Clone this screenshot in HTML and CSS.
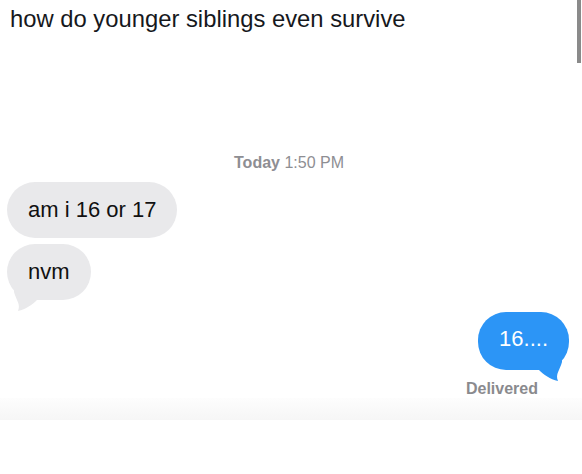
FILE: index.html
```html
<!DOCTYPE html>
<html lang="en">
<head>
<meta charset="utf-8">
<title>how do younger siblings even survive</title>
<link rel="stylesheet" href="styles.css">
</head>
<body>
  <div class="scrollbar"></div>
  <p class="post-text">how do younger siblings even survive</p>

  <section class="thread">
    <div class="stamp"><span class="stamp-day">Today</span> 1:50 PM</div>

    <div class="row row-in row-first">
      <div class="bubble bubble-in">am i 16 or 17</div>
    </div>
    <div class="row row-in">
      <div class="bubble bubble-in">nvm
        <svg class="tail tail-in" width="30" height="24" viewBox="0 0 30 24" aria-hidden="true">
          <path d="M3 0 L3 4 C5 12 10 16 7 23 C15 21 21 17 27 11 L27 0 Z"/>
        </svg>
      </div>
    </div>
    <div class="row row-out">
      <div class="bubble bubble-out">16....
        <svg class="tail tail-out" width="30" height="24" viewBox="0 0 30 24" aria-hidden="true">
          <path d="M3 0 L3 4 C5 12 10 16 7 23 C15 21 21 17 27 11 L27 0 Z"/>
        </svg>
      </div>
    </div>
    <div class="receipt">Delivered</div>
    <div class="fade"></div>
  </section>
</body>
</html>
```

FILE: styles.css
```css
html, body {
  margin: 0;
  padding: 0;
  background: #ffffff;
}

body {
  width: 582px;
  height: 474px;
  overflow: hidden;
  position: relative;
  font-family: "Liberation Sans", Arial, sans-serif;
  color: #0f1419;
}

/* thin scrollbar thumb at the top right */
.scrollbar {
  position: absolute;
  top: 0;
  right: 1px;
  width: 4px;
  height: 63px;
  background: #8a8a8a;
}

.post-text {
  margin: 0;
  padding: 5px 0 0 10px;
  font-size: 23.8px;
  line-height: 28px;
  color: #16181c;
}

.thread {
  display: flex;
  flex-direction: column;
  margin-top: 120px;
}

.stamp {
  text-align: center;
  font-size: 16px;
  line-height: 19px;
  color: #8e8e93;
  margin-left: -4px;
}

.stamp-day {
  font-weight: 700;
}

.row {
  display: flex;
  padding: 0 13px 0 7px;
}

.row-in {
  justify-content: flex-start;
  margin-top: 6px;
}

.row-first {
  margin-top: 10px;
}

.row-out {
  justify-content: flex-end;
  margin-top: 12px;
}

.bubble {
  position: relative;
  padding: 15px 21px;
  border-radius: 28px;
  font-size: 22px;
  line-height: 26px;
}

.bubble-in {
  background: #e9e9eb;
  color: #111111;
}

.bubble-out {
  background: #2c95f6;
  color: #ffffff;
  padding-top: 14px;
  padding-bottom: 18px;
}

.tail {
  position: absolute;
  bottom: -12px;
}

.tail-in {
  left: 4px;
  fill: #e9e9eb;
}

.tail-out {
  right: 4px;
  fill: #2c95f6;
  transform: scaleX(-1);
}

.receipt {
  align-self: flex-end;
  margin: 9px 44px 0 0;
  font-size: 16px;
  line-height: 19px;
  font-weight: 700;
  color: #8a8a8e;
}

.fade {
  height: 22px;
  margin-top: 0;
  background: linear-gradient(#fdfdfd, #f6f6f6);
}
```
